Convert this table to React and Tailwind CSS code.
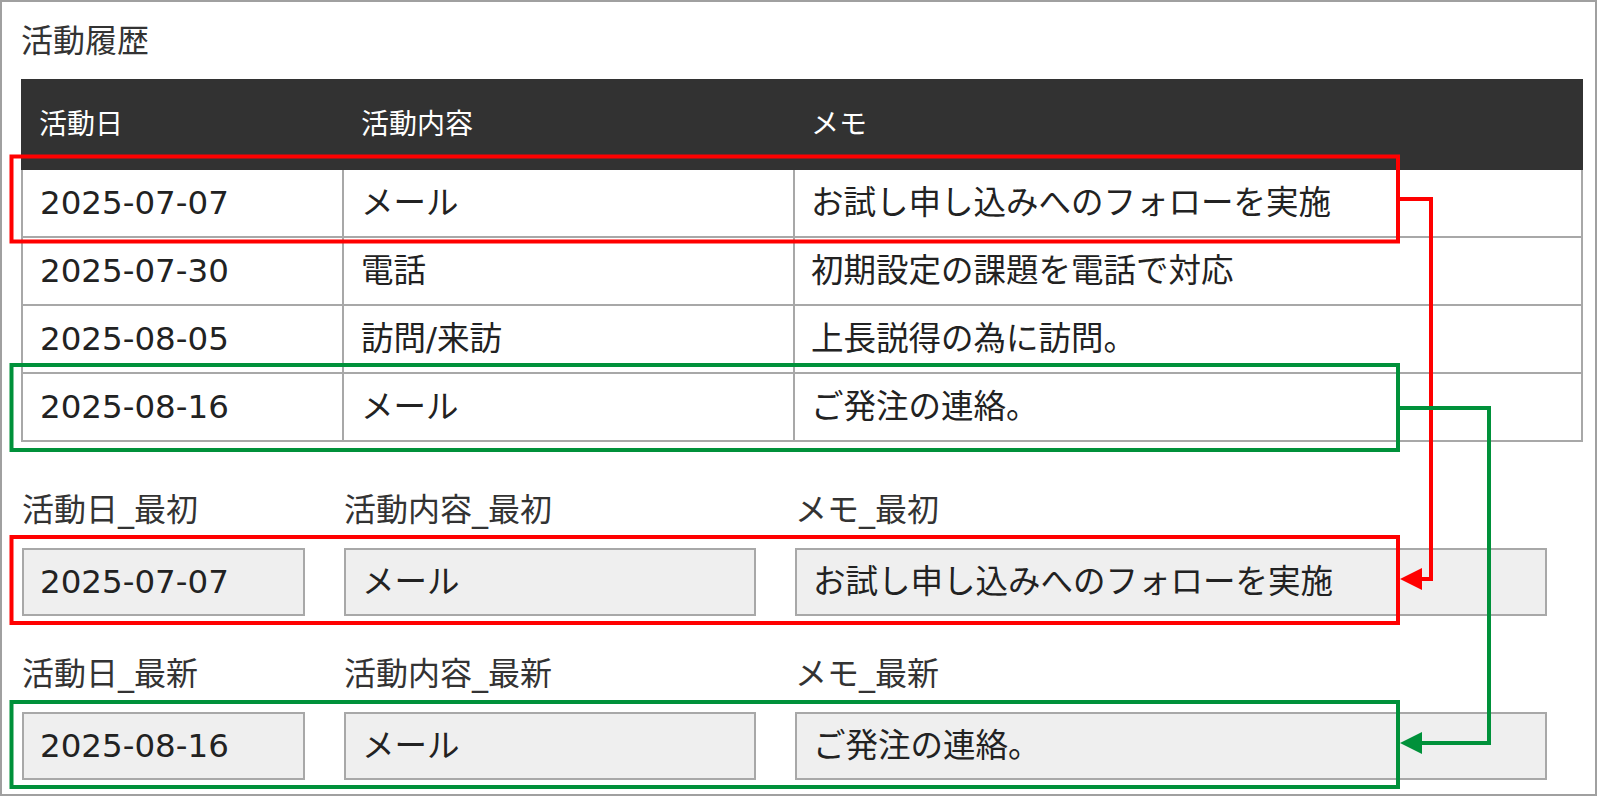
const rows = [
  ['2025-07-07', 'メール', 'お試し申し込みへのフォローを実施'],
  ['2025-07-30', '電話', '初期設定の課題を電話で対応'],
  ['2025-08-05', '訪問/来訪', '上長説得の為に訪問。'],
  ['2025-08-16', 'メール', 'ご発注の連絡。'],
]

const groups = [
  { suffix: '最初', values: rows[0] },
  { suffix: '最新', values: rows[3] },
]

const labels = ['活動日', '活動内容', 'メモ']

function FieldGroup({ suffix, values, className }) {
  return (
    <div className={`ml-[1px] grid grid-cols-[283px_412px_752px] gap-x-[39px] gap-y-[18px] ${className}`}>
      {labels.map((l) => (
        <div key={l} className="h-[40px] leading-[40px] text-[32px] text-[#333]">
          {l}_{suffix}
        </div>
      ))}
      {values.map((v, i) => (
        <div
          key={i}
          className="h-[68px] flex items-center pl-[16px] bg-[#efefef] border-2 border-[#a8a8a8] text-[32.5px] text-[#222] whitespace-nowrap"
        >
          {v}
        </div>
      ))}
    </div>
  )
}

export default function App() {
  return (
    <div className="relative w-[1600px] h-[796px] bg-white font-['DejaVu_Sans','Noto_Sans_CJK_JP',sans-serif]">
      <div className="w-[1597px] h-[796px] border-2 border-[#a0a0a0] pl-[19px] pt-[19px]">
        <h2 className="h-[40px] leading-[40px] text-[32px] text-[#333]">活動履歴</h2>

        <div className="mt-[18px] w-[1562px]">
          <div className="grid grid-cols-[321px_451px_1fr] h-[91px] bg-[#323232] text-white text-[28px] items-center">
            <div className="pl-[18px]">活動日</div>
            <div className="pl-[19px]">活動内容</div>
            <div className="pl-[18px]">メモ</div>
          </div>
          <div className="border-x-2 border-[#a8a8a8]">
            {rows.map((r) => (
              <div key={r[0]} className="grid grid-cols-[319px_451px_1fr] h-[68px] border-b-2 border-[#a8a8a8] text-[32.5px] text-[#222]">
                <div className="flex items-center px-[17px]">{r[0]}</div>
                <div className="flex items-center px-[17px] border-l-2 border-[#a8a8a8]">{r[1]}</div>
                <div className="flex items-center px-[16px] border-l-2 border-[#a8a8a8]">{r[2]}</div>
              </div>
            ))}
          </div>
        </div>

        <FieldGroup {...groups[0]} className="mt-[48px]" />
        <FieldGroup {...groups[1]} className="mt-[38px]" />
      </div>

      {/* annotation overlay */}
      <svg className="absolute inset-0 pointer-events-none" width="1600" height="796" viewBox="0 0 1600 796">
        <g fill="none" strokeWidth="4" strokeLinejoin="miter">
          <rect x="11.5" y="156.5" width="1386.5" height="85" stroke="#ff0000" />
          <rect x="11.5" y="537" width="1386.5" height="86" stroke="#ff0000" />
          <rect x="11.5" y="365" width="1386.5" height="85" stroke="#00913a" />
          <rect x="11.5" y="702" width="1386.5" height="85" stroke="#00913a" />
          <path d="M1400 199 H1431 V579 H1418" stroke="#ff0000" />
          <path d="M1400 408 H1489 V743 H1418" stroke="#00913a" />
        </g>
        <polygon points="1400,579 1422,568 1422,590" fill="#ff0000" />
        <polygon points="1400,743 1422,732 1422,754" fill="#00913a" />
      </svg>
    </div>
  )
}
